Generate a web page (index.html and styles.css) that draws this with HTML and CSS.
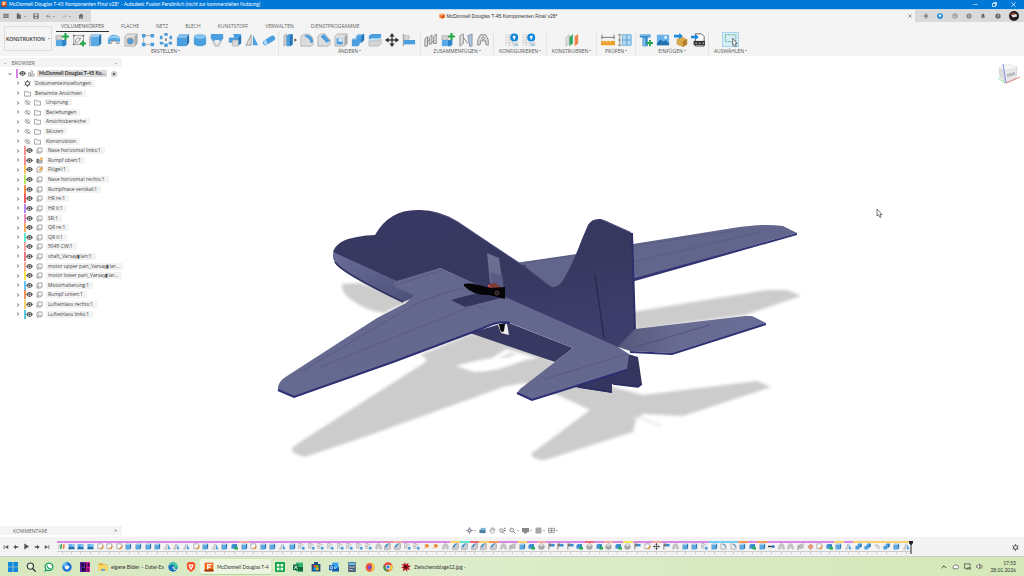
FILE: index.html
```html
<!DOCTYPE html>
<html lang="de">
<head>
<meta charset="utf-8">
<title>McDonnell Douglas T-45 Komponenten Final v28* - Autodesk Fusion Persönlich</title>
<link rel="stylesheet" href="styles.css">
</head>
<body>
<svg class="sprite" aria-hidden="true">
  <symbol id="fusion" viewBox="0 0 16 16"><path fill="#f26a1b" d="M1 1h14v14H1z"/><path fill="#8f3100" d="M1 12h14v3H1z"/><path fill="#fff" d="M5 3h7v2H7v2h4v2H7v3H5z"/></symbol>
  <symbol id="boxorange" viewBox="0 0 16 16"><path fill="#f77b28" d="M1 4l7-3 7 3v8l-7 3-7-3z"/><path fill="#ffb27a" d="M1 4l7-3 7 3-7 3z"/><path fill="#d9500f" d="M8 7l7-3v8l-7 3z"/></symbol>
  <symbol id="grid" viewBox="0 0 16 16"><path fill="#666" d="M1 2h4v3H1zm5 0h4v3H6zm5 0h4v3h-4zM1 6h4v3H1zm5 0h4v3H6zm5 0h4v3h-4zM1 10h4v3H1zm5 0h4v3H6zm5 0h4v3h-4z"/></symbol>
  <symbol id="file" viewBox="0 0 16 16"><path fill="#666" d="M2 1h7l4 4v10H2z"/><path fill="#ddd" d="M9 1v4h4z"/></symbol>
  <symbol id="save" viewBox="0 0 16 16"><path fill="#666" d="M1 1h14v14H1z"/><path fill="#ddd" d="M4 2h8v5H4zm1 8h6v4H5z"/></symbol>
  <symbol id="undo" viewBox="0 0 16 16"><path fill="none" stroke="#666" stroke-width="2" d="M6 3L2 7l4 4M2 7h8q4 0 4 5"/></symbol>
  <symbol id="redo" viewBox="0 0 16 16"><path fill="none" stroke="#aaa" stroke-width="2" d="M10 3l4 4-4 4M14 7H6q-4 0-4 5"/></symbol>
  <symbol id="home" viewBox="0 0 16 16"><path fill="#666" d="M8 1l7 7h-2v7h-4v-5H7v5H3V8H1z"/></symbol>
  <symbol id="newcomp" viewBox="0 0 16 16"><path fill="#d4d4d4" stroke="#999" stroke-width=".6" d="M1 3h7v5H1z"/><path fill="#58a9e4" d="M1 8h7v7H1z"/><path fill="#2f86c9" d="M8 8h5v5l-2 2H8z"/><path stroke="#22a84a" stroke-width="2.4" d="M12 0v8M8 4h8"/></symbol>
  <symbol id="sketch" viewBox="0 0 16 16"><path fill="none" stroke="#777" stroke-width=".8" d="M2 3h11v10H2z"/><path fill="#777" d="M1 2h2v2H1zm11 0h2v2h-2zM1 12h2v2H1z"/><path fill="none" stroke="#888" d="M4 11V8q1-3 6-2L6 11z"/><path stroke="#22a84a" stroke-width="2.2" d="M12.500 8.500v7M9 12h7"/></symbol>
  <symbol id="extrude" viewBox="0 0 16 16"><path fill="#58a9e4" d="M2 4h9v11H2z"/><path fill="#9bcbf0" d="M2 4l3-3h9l-3 3z"/><path fill="#2674b4" d="M11 4l3-3v11l-3 3z"/><path fill="none" stroke="#888" d="M1 15V4l3-3"/></symbol>
  <symbol id="revolve" viewBox="0 0 16 16"><path fill="#58a9e4" d="M1 8q1-6 8-6 6 1 6 6l-1 4q-1-3-4-3H6q-2 0-3 3H1z"/><path fill="#a9d4f3" d="M2 7q2-4 7-4 4 0 5 4Q8 3 2 7z"/><path fill="none" stroke="#888" d="M2 12h3l1-3h4l1 3h3"/></symbol>
  <symbol id="hole" viewBox="0 0 16 16"><path fill="#ddd" stroke="#999" stroke-width=".7" d="M1 4l3-3h11v11l-3 3H1z"/><path fill="#aaa" d="M12 4l3-3v11l-3 3z"/><circle cx="7" cy="9" r="4" fill="#999"/><circle cx="7.500" cy="9.500" r="3" fill="#4c9dda"/></symbol>
  <symbol id="rectpat" viewBox="0 0 16 16"><path fill="none" stroke="#aaa" d="M3 13V3h10M4 13h9"/><path fill="#4c9dda" d="M1 1h4v4H1zm10 0h4v4h-4zM1 11h4v4H1zm10 0h4v4h-4z"/></symbol>
  <symbol id="circpat" viewBox="0 0 16 16"><path fill="#4c9dda" d="M6 0h4v3H6zM1 3h3v4H1zm11 0h3v4h-3zM1 10h4v3H1zm10 0h4v3h-4zM6 12h4v4H6z"/><path fill="#888" d="M7 6h2v3H7z"/></symbol>
  <symbol id="box" viewBox="0 0 16 16"><path fill="#4c9fde" d="M1 5h11v10H1z"/><path fill="#82bdeb" d="M1 5l3-4h11l-3 4z"/><path fill="#2472b3" d="M12 5l3-4v10l-3 4z"/></symbol>
  <symbol id="cyl" viewBox="0 0 16 16"><path fill="#4c9fde" d="M1 4v8q1 3 7 3t7-3V4z"/><ellipse cx="8" cy="4" rx="7" ry="3" fill="#86c0ed"/></symbol>
  <symbol id="thread" viewBox="0 0 16 16"><path fill="#ddd" stroke="#888" stroke-width=".6" d="M1 5h14l-5 10H6z"/><path fill="#4c9fde" d="M1 1h14v5l-3 3H4L1 6z"/><path fill="#eee" d="M5 8l3 5 3-5z"/></symbol>
  <symbol id="combo" viewBox="0 0 16 16"><path fill="#4c9fde" d="M1 5h8v6H1zM6 1h9v7H8z"/><path fill="#d7d7d7" stroke="#999" stroke-width=".5" d="M5 8h7v7H5z"/><path fill="#2472b3" d="M12 5l3-2v9l-3 2z"/></symbol>
  <symbol id="mirror" viewBox="0 0 16 16"><path fill="#ddd" stroke="#888" stroke-width=".8" d="M7 2v12H1z"/><path fill="#4c9fde" d="M9 2v12h6z"/></symbol>
  <symbol id="pipe" viewBox="0 0 16 16"><path stroke="#4c9fde" stroke-width="6" stroke-linecap="round" d="M4 11l8-5"/><ellipse cx="4" cy="11" rx="2" ry="3" fill="#b2d8f5" transform="rotate(-25 4 11)"/></symbol>
  <symbol id="press" viewBox="0 0 16 16"><path fill="#ccc" stroke="#999" stroke-width=".6" d="M1 3l3-2v12l-3 2z"/><path fill="#4c9fde" d="M4 3l3-2h4v12l-3 2H4z"/><path fill="#2472b3" d="M8 3l3-2v12l-3 2z"/><path fill="#555" d="M13 6l3 2-3 2z"/></symbol>
  <symbol id="fillet" viewBox="0 0 16 16"><path fill="#ddd" stroke="#999" stroke-width=".7" d="M1 4q2-3 7-3 6 1 7 7v5l-2 2H1z"/><path fill="#4c9fde" d="M7 2q7 0 8 8l-3 2Q12 6 5 4z"/></symbol>
  <symbol id="chamfer" viewBox="0 0 16 16"><path fill="#ddd" stroke="#999" stroke-width=".7" d="M1 4l3-3h5l6 7v5l-2 2H1z"/><path fill="#4c9fde" d="M4 4l4-3 7 8-4 2z"/></symbol>
  <symbol id="shell" viewBox="0 0 16 16"><path fill="#ddd" stroke="#999" stroke-width=".7" d="M1 4l3-3h11v11l-3 3H1z"/><path fill="#aaa" d="M12 4l3-3v11l-3 3z"/><path fill="#4c9fde" d="M3 6h7v7H3z"/><path fill="#cfe6f7" d="M5 6h5v4H5z"/></symbol>
  <symbol id="combine" viewBox="0 0 16 16"><path fill="#4c9fde" d="M1 7h5V3l3-2h6v7l-3 3h-2v2l-2 2H1z"/><path fill="#82bdeb" d="M6 3l3-2h6l-3 2zM1 7l2-1h3v1z"/><path fill="#2472b3" d="M12 3l3-2v7l-3 3z"/></symbol>
  <symbol id="split" viewBox="0 0 16 16"><path fill="#4c9fde" d="M1 3l3-2h11v4l-3 3H1z"/><path fill="#c5e1f6" d="M1 7l3-1h11l-3 3H1z"/><path fill="#d5d5d5" stroke="#999" stroke-width=".5" d="M1 9h11l3-2v5l-3 3H1z"/></symbol>
  <symbol id="move" viewBox="0 0 16 16"><path stroke="#333" stroke-width="1.500" d="M8 2v12M2 8h12"/><path fill="#333" d="M8 0l3 4H5zm0 16l3-4H5zM0 8l4-3v6zm16 0l-4-3v6z"/></symbol>
  <symbol id="align" viewBox="0 0 16 16"><path fill="#888" d="M1 1h1v14H1z"/><path fill="#ddd" stroke="#999" stroke-width=".6" d="M2 3h6v4H2z"/><path fill="#4c9fde" d="M2 8h13v5H2z"/></symbol>
  <symbol id="joint2" viewBox="0 0 16 16"><path fill="#ddd" stroke="#777" stroke-width=".9" d="M1 15V7l3-3v11zM6 13V5l3-3v10zM11 12V4l3-3v11zM4 10l3-3m2 4l3-3"/></symbol>
  <symbol id="joint" viewBox="0 0 16 16"><path fill="#ddd" stroke="#777" stroke-width=".9" d="M2 14V8l3-6h6l3 6v6l-3-1V9H5v4z"/><circle cx="8" cy="6" r="1.500" fill="#f4f4f4" stroke="#777" stroke-width=".8"/></symbol>
  <symbol id="jointblue" viewBox="0 0 16 16"><path fill="#ddd" stroke="#777" stroke-width=".8" d="M1 3l4-2v11l-4 3z"/><path fill="#a9c5da" stroke="#668" stroke-width=".6" d="M10 3l5-2v14h-3z"/><path stroke="#777" d="M5 5l5 7"/></symbol>
  <symbol id="config" viewBox="0 0 16 16"><path fill="#f5f5f5" stroke="#ccc" stroke-width=".6" d="M1 2h13v12H1z"/><path fill="none" stroke="#bbb" stroke-width=".6" d="M1 5h13M1 8h13M1 11h13M5 2v12M9 2v12"/><circle cx="10.500" cy="5" r="4.500" fill="#0b84dc"/><path fill="#fff" d="M9 3h3v3h-1v2h-1V6H9z"/><path fill="#a9c9df" d="M10 12h5v3h-5z"/></symbol>
  <symbol id="planes" viewBox="0 0 16 16"><path fill="#ddd" stroke="#999" stroke-width=".5" d="M1 5l4-3v10l-4 3z"/><path fill="#35a866" d="M5 5l4-4v11l-4 3z"/><path fill="#f0834a" d="M11 4l4-3v11l-4 3z"/></symbol>
  <symbol id="measure" viewBox="0 0 16 16"><path fill="none" stroke="#666" d="M1 2v5m14-5v5M1 5h14"/><path fill="#eca02c" d="M0 9h16v5H0z"/><path fill="#f9d894" d="M2 9h1v2H2zm4 0h1v2H6zm4 0h1v2h-1z"/></symbol>
  <symbol id="interf" viewBox="0 0 16 16"><path fill="#b5dbf3" stroke="#4b96cf" stroke-width=".8" d="M5 2h10v12H5z"/><path fill="none" stroke="#378bcc" stroke-width=".8" d="M10 2v12M5 8h10"/><path fill="none" stroke="#666" stroke-width=".8" d="M2 1v14M0 2h4M0 14h4M0 8h4"/></symbol>
  <symbol id="bolt" viewBox="0 0 16 16"><path fill="#3c8dcc" d="M1 1h12v4h-3v10H4V5H1z"/><path fill="#8cc2e9" d="M1 1h12v2H1zm4 5h2v9H5z"/><path stroke="#22a84a" stroke-width="2.200" d="M12.500 8v7M9 11.500h7"/></symbol>
  <symbol id="image" viewBox="0 0 16 16"><path fill="#69b3ec" d="M1 2h14v12H1z"/><path fill="#226fab" d="M1 12l4-5 3 3 3-2 4 4v2H1z"/><circle cx="11" cy="5" r="1.500" fill="#fff"/></symbol>
  <symbol id="insert" viewBox="0 0 16 16"><path fill="#d9a94d" d="M3 7l6-3 6 3v6l-5 3-7-3z"/><path fill="#b37f27" d="M10 9l5-2v6l-5 3z"/><path fill="#1988d8" d="M0 2h6V0l4 3.500L6 7V5H0z"/></symbol>
  <symbol id="svgfile" viewBox="0 0 16 16"><path fill="#fff" stroke="#555" d="M5 1h7l3 3v11H5z"/><path fill="#333" d="M3 9h13v5H3z"/><path fill="#fff" d="M5 11h2v1H5zm4 0h2v1H9zm4 0h2v1h-2z"/><path fill="#1988d8" d="M0 3h5V1l4 3.500L5 8V6H0z"/></symbol>
  <symbol id="select" viewBox="0 0 16 16"><path fill="none" stroke="#3aa76d" stroke-width=".9" stroke-dasharray="2 1" d="M1.500 2h12v8h-12z"/><path fill="#fff" stroke="#333" stroke-width=".8" d="M10 6l5 6-2 0 1 3-2 0-1-2-1 1z"/></symbol>
  <symbol id="eye" viewBox="0 0 16 16"><path fill="#555" d="M0 8q8-11 16 0-8 11-16 0z"/><circle cx="8" cy="8" r="3.500" fill="#fff"/><circle cx="8" cy="8" r="2.300" fill="#333"/></symbol>
  <symbol id="eyeoff" viewBox="0 0 16 16"><path fill="none" stroke="#888" stroke-width="1.400" d="M1 8q7-9 14 0-7 9-14 0zM2 2l12 12"/><circle cx="8" cy="8" r="2" fill="none" stroke="#888"/></symbol>
  <symbol id="folder" viewBox="0 0 16 16"><path fill="#fafafa" stroke="#777" stroke-width="1.400" d="M1 3h5l1 2h8v9H1z"/></symbol>
  <symbol id="gear" viewBox="0 0 16 16"><circle cx="8" cy="8" r="4.500" fill="none" stroke="#555" stroke-width="2.400"/><path stroke="#555" stroke-width="2" d="M8 0v3m0 10v3M1 4l3 2m8 4l3 2M15 4l-3 2m-8 4l-3 2"/></symbol>
  <symbol id="comp" viewBox="0 0 16 16"><path fill="#f2f2f2" stroke="#777" stroke-width="1.200" d="M2 5l3-3h9v9l-3 3H2zM5 2v9h9M5 11l-3 3"/></symbol>
  <symbol id="compedit" viewBox="0 0 16 16"><path fill="#f2f2f2" stroke="#666" stroke-width="1.200" d="M2 5l3-3h9v9l-3 3H2z"/><path fill="#f2a02c" d="M8 7l5-5 3 2-5 6-4 1z"/></symbol>
  <symbol id="compstack" viewBox="0 0 16 16"><path fill="#777" d="M1 4h6v10H1z"/><path fill="#bbb" stroke="#666" d="M5 7h9v7H5z"/><path fill="#f2a02c" d="M10 1h5v5h-5z"/></symbol>
  <symbol id="assembly" viewBox="0 0 16 16"><path fill="#eee" stroke="#777" stroke-width="1.200" d="M1 6h5v8H1zM6 9h8v5H6zM6 2h4v7"/></symbol>
  <symbol id="tsketch" viewBox="0 0 16 16"><path fill="#fafafa" stroke="#777" stroke-width="1.200" d="M2 2h11v11H2z"/><path stroke="#ef8c2c" stroke-width="3" d="M8 14l7-7"/></symbol>
  <symbol id="textgreen" viewBox="0 0 16 16"><path fill="#3f93d3" d="M1 5l3-3h9v8l-3 3H1z"/><path fill="#2472b3" d="M10 5l3-3v8l-3 3z"/><path fill="#27ae4e" d="M8 9h8v6H8z"/></symbol>
  <symbol id="tpat" viewBox="0 0 16 16"><path fill="#fff" stroke="#999" stroke-width="1.300" d="M1 1h6v4H1zM1 8h6v4H1z"/><path fill="none" stroke="#aaa" d="M7 3h5v5"/><path fill="#4c9fde" d="M9 9h6v6H9z"/></symbol>
  <symbol id="tfillet" viewBox="0 0 16 16"><path fill="#ccc" stroke="#888" d="M1 15V8l6-6h8v10l-3 3z"/><path fill="#3f93d3" d="M2 9q1-8 10-8h3q-8 1-9 9z"/></symbol>
  <symbol id="tpin" viewBox="0 0 16 16"><path fill="#e98a35" d="M9 1l6 6-3 1-2 4-3-3-6 5 5-7-3-3 5-1z"/></symbol>
  <symbol id="tball" viewBox="0 0 16 16"><path fill="#aaa" stroke="#777" d="M2 5l6-4 6 4v7l-6 3-6-3z"/><path fill="#ddd" d="M2 5l6-4 6 4-6 3z"/></symbol>
  <symbol id="tflag" viewBox="0 0 16 16"><path fill="#777" d="M1 1h2v14H1zm2 0h4v7H3z"/><path fill="#3a8ecf" d="M7 2h8v6H7z"/></symbol>
  <symbol id="tround" viewBox="0 0 16 16"><path fill="#eee" stroke="#777" d="M2 2h6q6 1 6 7v5H2z"/><path fill="none" stroke="#2f86c9" stroke-width="2" d="M7 3q6 1 6 7"/></symbol>
  <symbol id="trigid" viewBox="0 0 16 16"><path stroke="#333" stroke-width="3" d="M0 8h10"/><circle cx="12" cy="8" r="3.500" fill="#3a78c9"/></symbol>
  <symbol id="terase" viewBox="0 0 16 16"><path fill="#eaa070" stroke="#a55" d="M2 9l6-7 6 5-5 8z"/></symbol>
  <symbol id="tgray" viewBox="0 0 16 16"><path fill="#ddd" stroke="#aaa" d="M2 5l5-2 3 3-4 3zM7 10l4-3 3 3-3 4z"/></symbol>
  <symbol id="bell" viewBox="0 0 16 16"><path fill="#666" d="M2 12q2-1 2-5 0-5 4-6 4 1 4 6 0 4 2 5zM6 13h4l-2 2z"/></symbol>
  <symbol id="ring" viewBox="0 0 16 16"><circle cx="8" cy="8" r="6" fill="none" stroke="#777" stroke-width="2"/><path stroke="#777" stroke-width="2" d="M8 8l-4-3m4 3h5"/></symbol>
  <symbol id="ext" viewBox="0 0 16 16"><circle cx="8" cy="8" r="7" fill="#888"/><path stroke="#ddd" d="M3 8h10M8 3v10"/></symbol>
  <symbol id="help" viewBox="0 0 16 16"><circle cx="8" cy="8" r="7" fill="#666"/><path fill="none" stroke="#eee" stroke-width="1.500" d="M6 6q2-3 4 0 0 1-2 2v2m0 1v2"/></symbol>
  <symbol id="globe" viewBox="0 0 16 16"><circle cx="8" cy="8" r="7.500" fill="#0b84dc"/><path fill="#fff" d="M5 4h6v5H9v3H7V9H5z"/></symbol>
  <symbol id="orbit" viewBox="0 0 16 16"><path fill="none" stroke="#557" stroke-width="1.300" d="M1 8q7-6 14 0-7 6-14 0zM8 1q-5 7 0 14 5-7 0-14z"/></symbol>
  <symbol id="look" viewBox="0 0 16 16"><path fill="#4f7f9f" d="M1 6h14v8H1z"/><path fill="#7fb4dc" d="M4 2h11v5H4z"/></symbol>
  <symbol id="hand" viewBox="0 0 16 16"><path fill="#eee" stroke="#888" d="M4 14L1 8l3 1V3h2v4l1-6h2v6l2-5 1 1-1 5 3-3-3 9z"/></symbol>
  <symbol id="lens" viewBox="0 0 16 16"><circle cx="6.500" cy="7" r="4.500" fill="#eee" stroke="#666" stroke-width="1.500"/><path stroke="#666" stroke-width="2" d="M10 10l5 5"/></symbol>
  <symbol id="zoomud" viewBox="0 0 16 16"><circle cx="5.500" cy="8" r="4" fill="#eee" stroke="#666" stroke-width="1.500"/><path stroke="#666" stroke-width="2" d="M8 11l4 4"/><path fill="#666" d="M13 1l3 3h-6zm0 9l3-3h-6z"/></symbol>
  <symbol id="screen" viewBox="0 0 16 16"><path fill="#888" d="M0 2h16v10H0zm5 10h6v3H5z"/></symbol>
  <symbol id="gridv" viewBox="0 0 16 16"><path fill="#ccc" stroke="#777" d="M2 2h12v12H2zM6 2v12m4-12v12M2 6h12M2 10h12"/></symbol>
  <symbol id="views" viewBox="0 0 16 16"><path fill="#eee" stroke="#777" stroke-width="1.400" d="M1 3h14v10H1zM8 3v10M1 8h14"/></symbol>
  <symbol id="windows" viewBox="0 0 16 16"><path fill="#1186dc" d="M0 0h7.500v7.500H0zm8.500 0H16v7.500H8.500zM0 8.500h7.500V16H0zm8.500 0H16V16H8.500z"/></symbol>
  <symbol id="search" viewBox="0 0 16 16"><circle cx="7" cy="6.500" r="5" fill="#e8f0dc" stroke="#333" stroke-width="1.800"/><path stroke="#333" stroke-width="2" d="M10.500 10.500l5 5"/></symbol>
  <symbol id="whatsapp" viewBox="0 0 16 16"><path fill="#fff" stroke="#16a05a" stroke-width="2" d="M2 14l1-3Q0 6 4 3q5-3 9 1 3 6-2 9-3 1-5 0z"/><path fill="none" stroke="#16a05a" stroke-width="1.800" d="M5 5q0 5 6 6"/></symbol>
  <symbol id="bird" viewBox="0 0 16 16"><circle cx="8" cy="8" r="7.500" fill="#176fd6"/><path fill="#65c2fa" d="M1 5q0-4 5-4l3 3-6 3z"/><path fill="#fff" d="M4 7q5-3 8 0-1 5-5 5-3-2-3-5z"/></symbol>
  <symbol id="flstudio" viewBox="0 0 16 16"><path fill="#e018b0" d="M0 0h16v16H0z"/><path fill="#5a1fa8" d="M0 0h8v16H0z"/><path fill="#1c0b28" d="M2 2h4v5H2zm1 7h4v6H3zm5-8h2v14H8zm4 1h3v5h-3zm0 8h2v5h-2z"/></symbol>
  <symbol id="explorer" viewBox="0 0 16 16"><path fill="#e8a82c" d="M1 2h6l2 2h6v10H1z"/><path fill="#ffd767" d="M1 5h14v9H1z"/><path fill="#4f9fdc" d="M5 11h6v3H5z"/></symbol>
  <symbol id="edge" viewBox="0 0 16 16"><circle cx="8" cy="8" r="7.500" fill="#1671c4"/><path fill="#3fcf9b" d="M1 7q1-6 7-6.500 7 1 7.500 6.500-1 3-5 2 1-5-4-5-4 0-5.500 3z"/><path fill="#d9e9c3" d="M7 9q0-2 2-2 2 0 1 3 2 2 5 1-4 4-8-2z"/></symbol>
  <symbol id="brave" viewBox="0 0 16 16"><path fill="#f4502a" d="M4 0h8l3 3-1 8-6 5-6-5-1-8z"/><path fill="#fff" d="M4 4h8l-1 4-3 5-3-5z"/><path fill="#f4502a" d="M6 6h4L8 9z"/></symbol>
  <symbol id="greenapp" viewBox="0 0 16 16"><rect width="16" height="16" rx="2" fill="#13a64b"/><path fill="#fff" d="M3 3h4v4H3zm6 0h4v4H9zM3 9h4v4H3zm6 0h4v4H9z"/></symbol>
  <symbol id="excel" viewBox="0 0 16 16"><path fill="#2bb673" d="M5 1h11v14H5z"/><path fill="#116a3c" d="M8 8h8v7H8zM0 4h9v9H0z"/><path stroke="#fff" stroke-width="1.500" d="M2 6l5 5m0-5l-5 5"/></symbol>
  <symbol id="store" viewBox="0 0 16 16"><path fill="#1f4c86" d="M1 3h14v12H1zM5 0h6v3H5z"/><path fill="#f25022" d="M4 5h4v4H4z"/><path fill="#7fba00" d="M8 5h4v4H8z"/><path fill="#00a4ef" d="M4 9h4v4H4z"/><path fill="#ffb900" d="M8 9h4v4H8z"/></symbol>
  <symbol id="outlook" viewBox="0 0 16 16"><path fill="#35a2ed" d="M5 1h10v8H5z"/><path fill="#105cb5" d="M5 8l5 3 6-4v8H5zM0 5h8v8H0z"/><circle cx="4" cy="9" r="2" fill="none" stroke="#fff" stroke-width="1.400"/></symbol>
  <symbol id="calc" viewBox="0 0 16 16"><path fill="#47596b" d="M2 0h12v16H2z"/><path fill="#68c0ef" d="M3 1h10v4H3z"/><path fill="#dde5ec" d="M4 7h2v2H4zm3 0h2v2H7zm3 0h2v2h-2zm-6 4h2v2H4zm3 0h2v2H7z"/><path fill="#2f8fdc" d="M10 11h2v3h-2z"/></symbol>
  <symbol id="firefox" viewBox="0 0 16 16"><circle cx="8" cy="8.500" r="7" fill="#f3562d"/><path fill="#ffc43b" d="M9 0q7 4 6 10-2 5-7 5 6-5 1-15z"/><circle cx="7.500" cy="8.500" r="3.400" fill="#7b4fd8"/></symbol>
  <symbol id="chrome" viewBox="0 0 16 16"><circle cx="8" cy="8" r="7.500" fill="#e6483a"/><path fill="#32a350" d="M1.500 4.500L8 15.500Q1 15 .5 8z"/><path fill="#fcc934" d="M8 5h7q2 8-7 10.500l3-6z"/><circle cx="8" cy="8" r="3.800" fill="#fff"/><circle cx="8" cy="8" r="2.800" fill="#3b7fe8"/></symbol>
  <symbol id="splat" viewBox="0 0 16 16"><path fill="#b3121d" d="M6 0l2 4 4-3-1 4 5 1-4 3 3 4-5-2v5l-3-4-4 3 1-5-4-1 4-2-3-4 4 1z"/><path fill="#511" d="M5 6h5v4H5z"/></symbol>
  <symbol id="cloud" viewBox="0 0 16 16"><path fill="#fff" stroke="#445" stroke-width="1.500" d="M3 13q-3-3 1-6 2-5 6-2 5 0 5 5-1 3-4 3z"/></symbol>
  <symbol id="net" viewBox="0 0 16 16"><path fill="none" stroke="#333" stroke-width="1.500" d="M14 7V2H1v10h9M5 14h5m1-4h4v4h-4z"/></symbol>
  <symbol id="sound" viewBox="0 0 16 16"><path fill="#fff" stroke="#333" stroke-width="1.300" d="M1 6h3l4-4v12l-4-4H1zM10 5q2 3 0 6m2-8q4 5 0 10"/></symbol>
  <symbol id="first" viewBox="0 0 16 16"><path fill="#555" d="M2 3h2v10H2zm12 0v10L5 8z"/></symbol>
  <symbol id="back" viewBox="0 0 16 16"><path fill="#555" d="M1 8l7-6v4h6v4H8v4z"/></symbol>
  <symbol id="play" viewBox="0 0 16 16"><path fill="#555" d="M3 1l11 7-11 7z"/></symbol>
  <symbol id="fwd" viewBox="0 0 16 16"><path fill="#555" d="M15 8L8 2v4H2v4h6v4z"/></symbol>
  <symbol id="last" viewBox="0 0 16 16"><path fill="#555" d="M12 3h2v10h-2zM2 3v10l9-5z"/></symbol>
</svg>

<div class="app">
  <header class="titlebar">
    <svg class="i6"><use href="#fusion"/></svg>
    <span class="titletext">McDonnell Douglas T-45 Komponenten Final v28* - Autodesk Fusion Persönlich (nicht zur kommerziellen Nutzung)</span>
    <button class="winbtn" aria-label="Minimieren"><svg class="i5" viewBox="0 0 10 10"><path stroke="#fff" d="M0 5h10"/></svg></button>
    <button class="winbtn" aria-label="Verkleinern"><svg class="i5" viewBox="0 0 10 10"><path fill="none" stroke="#fff" stroke-width="1.500" d="M1 3h6v6H1zM3 1h6v6"/></svg></button>
    <button class="winbtn" aria-label="Schließen"><svg class="i5" viewBox="0 0 10 10"><path stroke="#fff" stroke-width="1.500" d="M1 1l8 8M9 1L1 9"/></svg></button>
  </header>

  <div class="docbar">
    <div class="quick">
      <button aria-label="Daten"><svg class="i6"><use href="#grid"/></svg></button>
      <button class="drop" aria-label="Datei"><svg class="i6"><use href="#file"/></svg></button>
      <button aria-label="Speichern"><svg class="i6"><use href="#save"/></svg></button>
      <button class="drop" aria-label="Rückgängig"><svg class="i5"><use href="#undo"/></svg></button>
      <button class="drop" aria-label="Wiederholen"><svg class="i5"><use href="#redo"/></svg></button>
      <button aria-label="Startseite"><svg class="i6"><use href="#home"/></svg></button>
    </div>
    <div class="doctab">
      <span class="docname"><svg class="i6"><use href="#boxorange"/></svg>McDonnell Douglas T-45 Komponenten Final v28*</span>
      <button class="closetab" aria-label="Tab schließen"><svg class="i4" viewBox="0 0 10 10"><path stroke="#555" stroke-width="1.500" d="M1 1l8 8M9 1L1 9"/></svg></button>
    </div>
    <div class="account">
      <button aria-label="Neuer Tab"><svg class="i6" viewBox="0 0 10 10"><path stroke="#666" stroke-width="2" d="M5 1v8M1 5h8"/></svg></button>
      <button aria-label="Online"><svg class="i6"><use href="#globe"/></svg></button>
      <button aria-label="Auftragsstatus"><svg class="i6"><use href="#ring"/></svg></button>
      <button aria-label="Erweiterungen"><svg class="i6"><use href="#ext"/></svg></button>
      <button aria-label="Benachrichtigungen"><svg class="i6"><use href="#bell"/></svg></button>
      <button aria-label="Hilfe"><svg class="i6"><use href="#help"/></svg></button>
      <button aria-label="Profil"><svg class="i10" viewBox="0 0 20 20"><circle cx="10" cy="10" r="10" fill="#211a1a"/><path fill="#e8e2df" d="M4 8l11-2 1 5-8 2z"/><path fill="#9b4038" d="M2 6l7-3 5 2-10 3z"/></svg></button>
    </div>
  </div>

  <div class="ribbon">
    <button class="workspace">KONSTRUKTION <i class="caret"></i></button>
    <div class="ribbonbody">
      <nav class="tabs">
        <a href="#" class="active">VOLUMENKÖRPER</a><a href="#">FLÄCHE</a><a href="#">NETZ</a><a href="#">BLECH</a><a href="#">KUNSTSTOFF</a><a href="#">VERWALTEN</a><a href="#">DIENSTPROGRAMME</a>
      </nav>
      <div class="groups" id="groups"></div>
    </div>
  </div>

  <main class="stage">
    <svg class="model" viewBox="0 56 1024 481" preserveAspectRatio="xMidYMid slice" role="img" aria-label="3D-Modell des Flugzeugs">
      <defs>
        <filter id="soft" x="-5%" y="-5%" width="110%" height="110%"><feGaussianBlur stdDeviation="1.400"/></filter>
        <linearGradient id="body" x1="0" y1="0" x2="0.300" y2="1"><stop offset="0" stop-color="#373965"/><stop offset=".5" stop-color="#37385f"/><stop offset="1" stop-color="#3d3e6c"/></linearGradient>
        <linearGradient id="plate" x1="0" y1="1" x2="1" y2="0"><stop offset="0" stop-color="#666a91"/><stop offset="1" stop-color="#63668d"/></linearGradient>
        <linearGradient id="nose" x1="0" y1="0" x2="1" y2="1"><stop offset="0" stop-color="#6b6e99"/><stop offset="1" stop-color="#484b74"/></linearGradient>
        <linearGradient id="stab" x1="0" y1="0" x2="1" y2="0"><stop offset="0" stop-color="#56577b"/><stop offset=".4" stop-color="#686b92"/><stop offset="1" stop-color="#696e97"/></linearGradient>
      </defs>
      <g fill="#ccc" filter="url(#soft)">
        <path d="M342 284Q341 292 350 299Q366 311 384 313L412 300L360 283z"/>
        <path d="M292 448Q290 453 305 457L370 435L506 386L525 383L560 396L590 410L531 454Q533 460 545 460L633 432L636 419L643 414L683 416L771 387L757 381L643 395L613 387L555 362L500 335L473 333L420 355Q430 359 424 363L303 440z"/>
        <path d="M632 312L767 290L787 290L801 296L745 315L637 330z"/>
        <path d="M632 417h10l21 8-2 2z" fill="#eee"/>
      </g>
      <path filter="url(#soft)" fill="#fff" d="M456 366Q468 362 492 358L506 349L538 358Q522 360 514 364Q493 372 474 372z"/>
      <path fill="#ddd" filter="url(#soft)" d="M498 358l14-6 4 2-8 4z"/>
      <path fill="#62658c" d="M515 263L577 254L633 244L733 228Q762 223 783 226L797 233L633 279L540 305z"/>
      <path fill="#303273" d="M797 233v2L633 281.500v-3z"/>
      <path fill="none" stroke="#565a80" stroke-width=".8" d="M525 263L690 237L734 231M633 262L760 232"/>
      <path fill="#22223a" d="M521 267q2-4 5-1v4z"/>
      <path fill="url(#nose)" d="M334 251Q330 260 340 268Q350 277 403 302L418 296L440 268L397 268z"/>
      <path fill="none" stroke="#303260" stroke-width="1.500" d="M335 262Q342 273 403 302"/>
      <path fill="url(#body)" d="M333 252Q337 240 357 237Q366 235 375 235Q389 210 417 210Q438 209 458 222Q489 243 527 268L552 287Q560 288 566 275Q573 263 582 239L588 225Q592 218 601 219L632 233L635 330L618 348L505 298L440 268L397 281z"/>
      <path fill="none" stroke="#565983" d="M437 213Q449 216 458 222Q489 243 527 268L550 286M603 220L630 232"/>
      <path stroke="#292b50" stroke-width="1.500" d="M595 275l9 63"/>
      <path stroke="#2c2f6a" stroke-width="2" d="M632 233l3 96"/>
      <path fill="#383962" d="M470 333L507 322L573 348L555 362z"/>
      <path fill="#34365f" d="M575 387L612 393V384L638 387L642 384L638 357L628 354L600 372z"/>
      <path fill="none" stroke="#282b5f" stroke-width="1.500" d="M578 387l34 5m1-8l25 3 4-3"/>
      <path fill="url(#plate)" d="M440 268L394 282Q393 286 397 288L414 295L406 303L377 318L287 376Q277 382 278 390L294 397L393 362L473 332L493 324Q502 321 510 323L573 348L555 362L520 389L517 393L532 400L627 369L629 354L618 347L505 297z"/>
      <path fill="none" stroke="#2d2f72" stroke-width="2" d="M278 390L294 397L393 362L473 332L493 324Q502 321 510 323"/>
      <path fill="none" stroke="#2d2f72" stroke-width="2" d="M517 393L532 400L627 370"/>
      <path fill="none" stroke="#54577e" stroke-width=".8" d="M299 373L405 310Q430 296 463 288M320 367L475 305L485 310M545 379L627 354M395 285l48-15"/>
      <path fill="url(#stab)" d="M635 329L745 316L752 316L766 323L672 353L630 351L618 347z"/>
      <path fill="none" stroke="#2d2f72" stroke-width="2" d="M766 324L672 354L630 352"/>
      <path fill="none" stroke="#4c4f75" stroke-width=".8" d="M635 347L710 325M635 329l-17 18"/>
      <path fill="#34355e" d="M451 300L485 291L505 297L465 307z"/>
      <path fill="#6b6e91" d="M487 253l12 5 4 29-13-4z"/>
      <path fill="#5a5d83" d="M490 272l12 3 2 14-12-4z"/>
      <path fill="#803b35" d="M489 284l6-1 7 5v9l-12-2z"/>
      <path fill="#050507" d="M464 284Q471 282 490 288L505 287V299L489 295Q474 296 464 286z"/>
      <circle cx="497" cy="293" r="2" fill="#202026" stroke="#5b3a34"/>
      <circle cx="489" cy="286" r="1" fill="#f54"/>
      <path fill="#eee" d="M498 325l9-1 2 11-8-2z"/>
      <path fill="#08080c" d="M499 324h6l-1 7q-3 3-4-2z"/>
      <g transform="translate(998 62)">
        <path fill="#e8e8e8" stroke="#bbb" stroke-width=".5" d="M1 6l8-4 10 3-1 12-10 4-6-6z"/>
        <path fill="#f7f7f7" d="M1 6l8-4 10 3-13 3z"/><path fill="#ddd" d="M1 6l5 2 1 13-5-6z"/>
        <path fill="#bbb" d="M9 12l8-2v3l-8 2z"/>
        <path stroke="#6871ed" stroke-width=".8" d="M5 2l3 19"/><path stroke="#ee6565" stroke-width=".8" d="M8 21l14-6"/><path stroke="#67dc77" stroke-width=".8" d="M0 16l7 5"/>
      </g>
      <path fill="#fff" stroke="#444" stroke-width=".7" d="M877 209v7l1.500-1.500 1.500 3 1-.5-1-2.500h2z"/>
    </svg>

    <aside class="browser">
      <div class="panelhead"><span class="grip">–</span><span>BROWSER</span><button aria-label="Einklappen">–</button></div>
      <div class="tree" id="tree"></div>
    </aside>

    <div class="bottom">
      <div class="panelhead comments"><span>KOMMENTARE</span><button aria-label="Kommentar hinzufügen">+</button></div>
      <div class="viewnav">
        <button class="drop" aria-label="Orbit"><svg class="i7"><use href="#orbit"/></svg></button>
        <button aria-label="Ansehen"><svg class="i7"><use href="#look"/></svg></button>
        <button aria-label="Pan"><svg class="i7"><use href="#hand"/></svg></button>
        <button aria-label="Zoom"><svg class="i7"><use href="#zoomud"/></svg></button>
        <button class="drop" aria-label="Zoomfenster"><svg class="i7"><use href="#lens"/></svg></button>
        <button class="drop" aria-label="Anzeige"><svg class="i7"><use href="#screen"/></svg></button>
        <button class="drop" aria-label="Raster"><svg class="i7"><use href="#gridv"/></svg></button>
        <button class="drop" aria-label="Ansichtsfenster"><svg class="i7"><use href="#views"/></svg></button>
      </div>
    </div>
  </main>

  <section class="timeline" aria-label="Zeitachse">
    <div class="player">
      <button aria-label="Anfang"><svg class="i6"><use href="#first"/></svg></button>
      <button aria-label="Zurück"><svg class="i6"><use href="#back"/></svg></button>
      <button aria-label="Wiedergabe"><svg class="i7"><use href="#play"/></svg></button>
      <button aria-label="Vor"><svg class="i6"><use href="#fwd"/></svg></button>
      <button aria-label="Ende"><svg class="i6"><use href="#last"/></svg></button>
    </div>
    <div class="features" id="features"></div>
    <svg class="marker" viewBox="0 0 4 13"><path fill="#222" d="M0 0h4v2L2.500 4v9h-1V4L0 2z"/></svg>
    <button class="settings" aria-label="Einstellungen"><svg class="i7"><use href="#gear"/></svg></button>
  </section>

  <footer class="taskbar">
    <button aria-label="Start"><svg class="i10"><use href="#windows"/></svg></button>
    <button aria-label="Suche"><svg class="i10"><use href="#search"/></svg></button>
    <button aria-label="WhatsApp"><svg class="i10"><use href="#whatsapp"/></svg></button>
    <button aria-label="Thunderbird"><svg class="i10"><use href="#bird"/></svg></button>
    <button aria-label="Audio"><svg class="i10"><use href="#flstudio"/></svg></button>
    <button class="task files"><svg class="i10"><use href="#explorer"/></svg><span>eigene Bilder – Datei-Ex</span></button>
    <button aria-label="Edge"><svg class="i10"><use href="#edge"/></svg></button>
    <button aria-label="Brave"><svg class="i10"><use href="#brave"/></svg></button>
    <button class="task current"><svg class="i10"><use href="#fusion"/></svg><span>McDonnell Douglas T-4</span></button>
    <button aria-label="Tabellen"><svg class="i10"><use href="#greenapp"/></svg></button>
    <button aria-label="Excel"><svg class="i10"><use href="#excel"/></svg></button>
    <button aria-label="Store"><svg class="i10"><use href="#store"/></svg></button>
    <button aria-label="Outlook"><svg class="i10"><use href="#outlook"/></svg></button>
    <button aria-label="Rechner"><svg class="i10"><use href="#calc"/></svg></button>
    <button aria-label="Firefox"><svg class="i10"><use href="#firefox"/></svg></button>
    <button aria-label="Chrome"><svg class="i10"><use href="#chrome"/></svg></button>
    <button class="task viewer"><svg class="i10"><use href="#splat"/></svg><span>Zwischenablage12.jpg -</span></button>
    <div class="tray">
      <svg class="i6" viewBox="0 0 10 10"><path fill="none" stroke="#333" stroke-width="1.500" d="M1 7l4-4 4 4"/></svg>
      <svg class="i7"><use href="#cloud"/></svg><svg class="i7"><use href="#net"/></svg><svg class="i7"><use href="#sound"/></svg>
      <time class="clock">17:53<br>28.01.2026</time>
    </div>
  </footer>
</div>
<script src="app.js"></script>
</body>
</html>
```
FILE: styles.css
```css
* { box-sizing: border-box; }
body { margin: 0; font-family: "Open Sans", "Noto Sans", sans-serif; font-size: 5px; line-height: 8px; color: #444; background: #fff; }
button { border: 0; margin: 0; padding: 0; background: none; font: inherit; color: inherit; display: flex; align-items: center; justify-content: center; }
a { color: inherit; text-decoration: none; }
svg { display: block; flex: none; }
.sprite { display: none; }
.i4 { width: 4px; height: 4px; }
.i5 { width: 5px; height: 5px; }
.i6 { width: 6px; height: 6px; }
.i7 { width: 7px; height: 7px; }
.i10 { width: 10px; height: 10px; }
.i14 { width: 14px; height: 14px; }
.app { height: 100vh; display: flex; flex-direction: column; overflow: hidden; white-space: nowrap; }

.titlebar { height: 10px; flex: none; display: flex; align-items: center; padding: 0 2px 1px 1px; gap: 2px; background: #0078d7; border-bottom: 1px solid #c5d6e2; color: #fff; }
.titletext { flex: 1; font-family: Lato, sans-serif; }
.winbtn { width: 17px; height: 8px; }

.docbar { height: 12px; flex: none; display: flex; background: #dadada; font-family: "Liberation Sans", sans-serif; }
.quick { width: 91px; display: flex; align-items: center; gap: 7px; padding-left: 3px; }
.drop::after { content: ""; border: 1px solid transparent; border-top-color: #666; margin: 1px 0 0 2px; }
.doctab { flex: 1; display: flex; align-items: center; background: #f4f4f4; }
.docname { flex: 1; display: flex; align-items: center; justify-content: center; gap: 2px; color: #333; }
.closetab { width: 10px; height: 10px; }
.account { width: 109px; display: flex; align-items: center; justify-content: space-between; padding: 0 5px 0 8px; }

.ribbon { flex: none; height: 34px; display: flex; background: #f4f4f4; }
.workspace { width: 48px; height: 25px; margin: 4px 1px 0 4px; border: 1px solid #ddd; border-radius: 1px; font-weight: 600; gap: 2px; color: #333; }
.caret { display: inline-block; border: 1px solid transparent; border-top-color: #555; vertical-align: middle; margin-left: 1px; }
.ribbonbody { flex: 1; }
.tabs { display: flex; height: 10px; padding-left: 3px; gap: 7px; color: #666; }
.tabs a { padding: 0 5px; border-bottom: 1px solid transparent; }
.tabs .active { border-color: #333; color: #555; }
.groups { display: flex; height: 24px; }
.group { display: flex; flex-direction: column; border-right: 1px solid #e4e4e4; height: 23px; }
.group:last-child { border: 0; }
.tools { display: flex; flex: none; height: 15px; }
.tools button { flex: 1; }
.grouplabel { height: 8px; color: #555; }
.erstellen { width: 226px; }
.aendern { width: 142px; padding: 0 2px; }
.fuegen { width: 73px; padding: 0 1px; }
.konfig { width: 53px; padding: 0 9px; }
.konstr { width: 50px; }
.pruefen { width: 39px; padding: 0 2px; }
.einfuegen { width: 73px; padding: 0 1px; }
.auswahl { width: 43px; }
.auswahl .tools button { background: #d8edf8; border: 1px solid #a6d4ec; margin: 0 13px; }

.stage { flex: 1; min-height: 0; display: grid; grid-template: minmax(0, 1fr) / minmax(0, 1fr); background: #fff; }
.stage > * { grid-area: 1 / 1; }
.model { width: 100%; height: 100%; }
.browser { width: 122px; padding-top: 2px; align-self: start; z-index: 1; }
.panelhead { height: 9px; display: flex; align-items: center; gap: 5px; padding: 0 5px 0 4px; background: #f4f4f4; color: #666; }
.panelhead button { margin-left: auto; }
.tree { height: 250px; margin-top: 2px; display: grid; grid-auto-rows: 1fr; }
.row { display: flex; align-items: center; padding-left: 16px; }
.row.root { padding-left: 8px; font-family: Lato, sans-serif; font-weight: 700; color: #333; }
.twist { width: 4px; height: 4px; margin-right: 4px; }
.stripe { width: 2px; height: 9px; }
.root .stripe { margin-right: 1px; }
.row svg.i7 { margin-right: 2px; }
.row.sub svg.i7, .row.comp svg.i7 { margin-right: 3px; }
.chip { background: #f3f3f3; padding: 0 4px 0 2px; line-height: 7px; }
.root .chip { background: #ddd; padding-right: 2px; }
.radio { appearance: none; margin: 0 0 0 4px; width: 6px; height: 6px; border: 2px solid #ccc; border-radius: 50%; background: #345; }
.bottom { align-self: end; display: grid; grid-template-columns: 122px 1fr 122px; align-items: center; padding-bottom: 2px; z-index: 1; }
.comments { padding-left: 13px; }
.viewnav { display: flex; justify-content: center; gap: 3px; }
.viewnav .drop::after { margin-left: 1px; }

.timeline { height: 20px; flex: none; display: flex; align-items: flex-start; background: #f3f3f3; padding-top: 4px; border-bottom: 1px solid #ccc; }
.player { width: 57px; display: flex; justify-content: space-between; padding: 2px 7px 0 3px; }
.features { flex: 0 1 854px; display: flex; }
.feature { flex: 1; min-width: 0; height: 13px; display: flex; flex-direction: column; align-items: center; gap: 1px; border-top: 2px solid; }
.feature::after { content: ""; width: 100%; height: 2px; border-top: 1px solid #ccc; background: linear-gradient(90deg, transparent 45%, #ccc 45%, #ccc 55%, transparent 55%); }
.marker { width: 4px; height: 13px; margin-left: -2px; }
.settings { margin: 3px 5px 0 auto; }

.taskbar { height: 19px; flex: none; display: flex; align-items: center; padding: 0 8px 0 4px; background: linear-gradient(90deg, #d7e7be, #dcecca 45%, #d4e8b8); font-family: Lato, sans-serif; color: #333; }
.taskbar > button { width: 18px; height: 16px; flex: 0 1 auto; }
.taskbar > .task { justify-content: flex-start; gap: 3px; padding-left: 4px; border-radius: 2px; }
.taskbar > .files { width: 70px; }
.taskbar > .current { width: 71px; background: #edf5e1; box-shadow: inset 0 -1px #b7d3a0; }
.taskbar > .viewer { width: 70px; }
.tray { margin-left: auto; display: flex; align-items: center; gap: 5px; }
.clock { line-height: 7px; text-align: right; margin-left: 2px; }
```
FILE: app.js
```javascript
const icon = (name, size) => `<svg class="${size}"><use href="#${name}"/></svg>`;

const groups = [
  ["erstellen", "ERSTELLEN", "newcomp sketch extrude revolve hole rectpat circpat box cyl thread combo mirror pipe"],
  ["aendern", "ÄNDERN", "press fillet chamfer shell combine split move align"],
  ["fuegen", "ZUSAMMENFÜGEN", "joint2 newcomp jointblue joint"],
  ["konfig", "KONFIGURIEREN", "config config"],
  ["konstr", "KONSTRUIEREN", "planes"],
  ["pruefen", "PRÜFEN", "measure interf"],
  ["einfuegen", "EINFÜGEN", "bolt image insert svgfile"],
  ["auswahl", "AUSWÄHLEN", "select"]
];
document.getElementById("groups").innerHTML = groups.map(([cls, label, tools]) =>
  `<div class="group ${cls}"><div class="tools">${tools.split(" ").map(t =>
    `<button aria-label="${t}">${icon(t, "i14")}</button>`).join("")}</div>
   <button class="grouplabel">${label}<i class="caret"></i></button></div>`).join("");

const twist = open => `<svg class="twist" viewBox="0 0 8 8"><path fill="none" stroke="#666" stroke-width="1.500" d="${open ? "M1 2l3 4 3-4" : "M2 1l4 3-4 3"}"/></svg>`;
const folders = ["Ursprung", "Beziehungen", "Ansichtsbereiche", "Skizzen", "Konstruktion"];
const parts = [
  ["Nase horizontal links:1", "#f98f93"], ["Rumpf oben:1", "#f98f93", "compstack"],
  ["Flügel:1", "#fbc65a", "compedit"], ["Nase horizontal rechts:1", "#b2ea5b"],
  ["Rumpfnase vertikal:1", "#f98d4d"], ["HR re:1", "#f5575f"], ["HR li:1", "#b785f5"],
  ["SR:1", "#e88abf"], ["QR re:1", "#fab05c"], ["QR li:1", "#5cf0d3"], ["5045 CW:1", "#faa0a6"],
  ["shaft_Varsay▮lan:1", "#ef7482"], ["motor upper part_Varsay▮lar...", "#fbab8f"],
  ["motor lower part_Varsay▮lar...", "#f9e64c"], ["Motorhalterung:1", "#66c5f8"],
  ["Rumpf unten:1", "#fa935c"], ["Lufteinlass rechts:1", "#fbd36d"], ["Lufteinlass links:1", "#4fcbdc"]
];
document.getElementById("tree").innerHTML =
  `<div class="row root">${twist(true)}<i class="stripe" style="background:#d982e6"></i>${icon("eye", "i7")}${icon("assembly", "i7")}<span class="chip">McDonnell Douglas T-45 Ko...</span><input class="radio" type="radio" checked aria-label="Aktivieren"></div>` +
  `<div class="row">${twist()}${icon("gear", "i7")}<span class="chip">Dokumenteinstellungen</span></div>` +
  `<div class="row">${twist()}${icon("folder", "i7")}<span class="chip">Benannte Ansichten</span></div>` +
  folders.map(n => `<div class="row sub">${twist()}${icon("eyeoff", "i7")}${icon("folder", "i7")}<span class="chip">${n}</span></div>`).join("") +
  parts.map(([n, c, i]) => `<div class="row comp">${twist()}<i class="stripe" style="background:${c}"></i>${icon("eye", "i7")}${icon(i || "comp", "i7")}<span class="chip">${n}</span></div>`).join("");

const colors = { p: "#d78ae2", s: "#f8a5a5", k: "#e38eae", y: "#fbcf6b", t: "#61ead0", r: "#ef6875", o: "#fa9659", c: "#6fcef4", v: "#f4e65b" };
const steps = { P: "planes", I: "image", S: "tsketch", E: "extrude", M: "mirror", G: "textgreen", R: "tpat", J: "joint", K: "joint2", F: "tfillet", N: "tpin", B: "tball", L: "tflag", V: "move", O: "tround", D: "trigid", X: "terase", C: "combine", W: "tgray" };
const order = "PIIISSSEEEEMMMSEMEGESEEMERRRRRRRRJFFRRNNJFFFFFJKEGBLLLGBGBGBLSVLJEERE" + "OOEGEDJJKXSGEMCCWCEM";
const bars = "p".repeat(19) + "s" + "p".repeat(14) + "ks" + "ppppp" + "ytryo" + "pp" + "yps" + "pppp" + "rpspv" + "pps" + "ppppp" + "ccc" + "opo" + "ppppppp" + "yp" + "yyyyyy";
document.getElementById("features").innerHTML = [...order].map((s, i) =>
  `<div class="feature" style="border-color:${colors[bars[i]]}">${icon(steps[s], "i7")}</div>`).join("");
```
